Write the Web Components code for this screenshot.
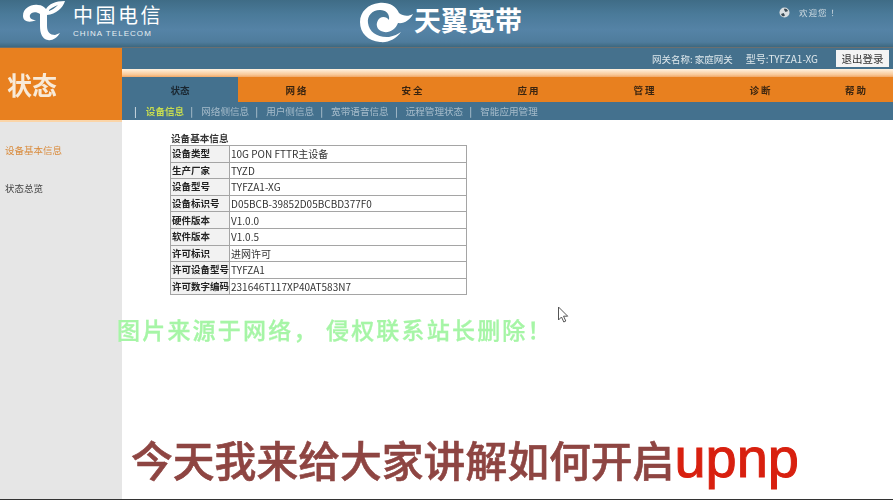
<!DOCTYPE html>
<html lang="zh">
<head>
<meta charset="utf-8">
<title>设备信息</title>
<style>
  html, body { margin: 0; height: 100%; background: #fff; overflow: hidden; }
  body { font-family: "Noto Sans CJK SC", "Noto Sans", sans-serif; font-size: 10px; color: #333; }
  gateway-page { filter: blur(.35px); }
</style>
</head>
<body>
<gateway-page>
  <top-banner slot="banner"></top-banner>
  <side-menu slot="side" title-text="状态">
    <side-item active>设备基本信息</side-item>
    <side-item>状态总览</side-item>
  </side-menu>
  <status-bar slot="status"></status-bar>
  <main-nav slot="nav"></main-nav>
  <info-table slot="content"></info-table>
</gateway-page>
<video-overlay></video-overlay>

<script>
class GatewayPage extends HTMLElement {
  constructor(){
    super()
    this.attachShadow({mode: 'open'}).innerHTML = `
      <style>
        :host { display: grid; grid-template-columns: 122px 1fr; grid-template-rows: 48px auto 1fr; height: 499px; }
        .banner { grid-column: 1 / 3; }
        .side { grid-row: 2 / 4; }
        .content { padding: 12px 0 0 48px; }
      </style>
      <div class="banner"><slot name="banner"></slot></div>
      <div class="side"><slot name="side"></slot></div>
      <div><slot name="status"></slot><slot name="nav"></slot></div>
      <div class="content"><slot name="content"></slot></div>`
  }
}
customElements.define('gateway-page', GatewayPage)

class TopBanner extends HTMLElement {
  constructor(){
    super()
    this.attachShadow({mode: 'open'}).innerHTML = `
      <style>
        :host { display: flex; height: 48px; box-sizing: border-box; color: #fff;
          background: linear-gradient(#3f6c86 0, #4a7a99 14px, #5583a6 30px, #4f7c9c 42px, #3d6880 47px); border-bottom: 1px solid #6b6f70; }
        .telecom { display: flex; align-items: flex-start; gap: 7px; width: 358px; padding: 0 0 0 22px; box-sizing: border-box; }
        .names { display: flex; flex-direction: column; }
        .cn { font: 20px/29px "Noto Sans CJK SC", sans-serif; letter-spacing: 2.500px; white-space: nowrap; }
        .en { font: 8px/9.500px "Liberation Sans", sans-serif; letter-spacing: 1.050px; white-space: nowrap; color: #e6eef2; }
        .wing { display: flex; align-items: flex-start; width: 421px; padding-top: 1px; }
        .wing b { font: 700 27px/38px "Noto Sans CJK SC", sans-serif; }
        .hello { display: flex; gap: 9px; align-items: center; height: 24px; font-size: 8.5px; color: #cfdbe2; }
        .hello span { letter-spacing: 1px; }
      </style>
      <div class="telecom">
        <svg width="44" height="42" viewBox="0 0 44 42">
          <path fill="#fff" fill-rule="evenodd" d="M1 16C1 8 9 4 16 5C20 5 22 7 24 9C27 4 33 1 43 1C41 8 34 14 25 15L25 26C25 32 28 35 33 35L38 33C35 38 30 41 26 40C20 39 18 33 18 26L18 14C14 11 9 12 8 15C7 18 10 20 14 20C8 23 1 22 1 16ZM27 10C29 8 32 7 36 5C33 8 30 10 27 11Z"/>
        </svg>
        <div class="names"><span class="cn">中国电信</span><span class="en">CHINA TELECOM</span></div>
      </div>
      <div class="wing">
        <svg width="56" height="42" viewBox="0 0 56 42">
          <path fill="#fff" fill-rule="evenodd" d="M21 2C31 1 38 5 41 12C45 15 50 16 55 13C52 19 46 23 40 22C37 30 29 33 23 30C17 27 18 20 22 17C25 15 29 16 31 19C32 13 28 9 22 9C14 9 9 15 10 22C11 31 20 37 31 36C36 35 40 33 43 31C38 38 30 42 22 41C10 40 2 32 2 21C2 11 10 3 21 2Z"/>
        </svg>
        <b>天翼宽带</b>
      </div>
      <div>
        <div class="hello">
          <svg width="11" height="11" viewBox="0 0 11 11"><circle cx="5.5" cy="5.5" r="5" fill="#d8dde0"/><path fill="#3a4a55" d="M5.5 1.5a4 4 0 0 1 3.6 2.400L6.500 5 5 2.800zM2 7l2.700-1 1.300 2.400L4 9.500A4 4 0 0 1 2 7z"/></svg>
          <span>欢迎您 ！</span>
        </div>
      </div>`
  }
}
customElements.define('top-banner', TopBanner)

class SideMenu extends HTMLElement {
  constructor(){
    super()
    this.attachShadow({mode: 'open'}).innerHTML = `
      <style>
        :host { display: flex; flex-direction: column; height: 100%; background: #e6e6e6; }
        h1 { margin: 0; height: 74px; box-sizing: border-box; padding: 19px 0 0 7px; background: #e8801f; color: #f8ead8;
          border-bottom: 2px solid #fbd5a8; font: 700 25px/34px "Noto Sans CJK SC", sans-serif; }
        .items { display: flex; flex-direction: column; gap: 20px; padding-top: 19px; }
      </style>
      <h1>${this.getAttribute('title-text')}</h1>
      <div class="items"><slot></slot></div>`
  }
}
customElements.define('side-menu', SideMenu)

class SideItem extends HTMLElement {
  constructor(){
    super()
    this.attachShadow({mode: 'open'}).innerHTML = `
      <style>
        :host { display: block; padding-left: 5px; font-size: 9.5px; line-height: 18px; color: #444; }
        :host([active]) { color: #d98a3a; }
      </style>
      <slot></slot>`
  }
}
customElements.define('side-item', SideItem)

class StatusBar extends HTMLElement {
  constructor(){
    super()
    this.attachShadow({mode: 'open'}).innerHTML = `
      <style>
        :host { display: flex; justify-content: flex-end; align-items: center; height: 21px; box-sizing: border-box;
          padding-right: 4px; background: #45718d; color: #dfe8ec; font-size: 10px; }
        .name { font-size: 9.500px; margin-right: 13px; }
        button { all: unset; width: 53px; height: 17px; margin-left: 18px; background: #f4f4f4; color: #333; font-size: 10.500px; text-align: center; line-height: 17px; }
      </style>
      <span class="name">网关名称: 家庭网关</span>
      <span>型号:TYFZA1-XG</span>
      <button>退出登录</button>`
  }
}
customElements.define('status-bar', StatusBar)

class MainNav extends HTMLElement {
  static items = ['状态', '网络', '安全', '应用', '管理', '诊断', '帮助']
  static subItems = ['设备信息', '网络侧信息', '用户侧信息', '宽带语音信息', '远程管理状态', '智能应用管理']

  constructor(){
    super()
    this.attachShadow({mode: 'open'}).innerHTML = `
      <style>
        :host { display: block; }
        .stripe { height: 8px; background: linear-gradient(#fff2e0, #f9c998 70%, #f0a868); }
        ul { list-style: none; margin: 0; padding: 0; }
        .tabs { display: grid; grid-template-columns: repeat(6, 116px) 1fr; height: 25px; background: #e8801f; }
        .tabs li { text-align: center; padding-left: 2px; font: 700 9.5px/26px "Noto Sans CJK SC", sans-serif; letter-spacing: 2px; color: #3a2410; }
        .tabs li.on { padding-left: 0; background: #44718e; color: #1a2630; letter-spacing: 0; }
        .sub { display: flex; height: 18px; align-items: center; gap: 6.400px; padding-left: 12px; background: #44718e; color: #a6bccb; font-size: 9.6px; }
        .sub li { display: flex; gap: 6px; }
        .sub li::before { content: "|"; color: #cfdbe2; padding-right: 2px; }
        .sub li.on { color: #c6dc50; font-weight: 700; }
        .sub li:first-child::before { padding-right: 3px; }
      </style>
      <div class="stripe"></div>
      <ul class="tabs">${MainNav.items.map((item, i) => `<li class="${i == 0 ? 'on' : ''}">${item}</li>`).join('')}</ul>
      <ul class="sub">${MainNav.subItems.map((item, i) => `<li class="${i == 0 ? 'on' : ''}">${item}</li>`).join('')}</ul>`
  }
}
customElements.define('main-nav', MainNav)

class InfoTable extends HTMLElement {
  static rows = [
    ['设备类型', '10G PON FTTR主设备'],
    ['生产厂家', 'TYZD'],
    ['设备型号', 'TYFZA1-XG'],
    ['设备标识号', 'D05BCB-39852D05BCBD377F0'],
    ['硬件版本', 'V1.0.0'],
    ['软件版本', 'V1.0.5'],
    ['许可标识', '进网许可'],
    ['许可设备型号', 'TYFZA1'],
    ['许可数字编码', '231646T117XP40AT583N7']
  ]

  constructor(){
    super()
    this.attachShadow({mode: 'open'}).innerHTML = `
      <style>
        :host { display: block; width: 297px; font-size: 10px; color: #333; }
        .title { font-size: 9.6px; font-weight: 700; line-height: 13px; height: 13px; padding-left: 1px; }
        table { width: 100%; border-collapse: collapse; table-layout: fixed; }
        td { border: 1px solid #a5a5a5; height: 15.600px; padding: 0 0 0 1px; line-height: 15px; white-space: nowrap; overflow: hidden; box-sizing: content-box; }
        td:first-child { width: 57px; font-size: 9.5px; background: #f2f2f2; font-weight: 700; color: #222; }
      </style>
      <div class="title">设备基本信息</div>
      <table>${InfoTable.rows.map(([label, value]) => `<tr><td>${label}</td><td>${value}</td></tr>`).join('')}</table>`
  }
}
customElements.define('info-table', InfoTable)

class VideoOverlay extends HTMLElement {
  constructor(){
    super()
    this.attachShadow({mode: 'open'}).innerHTML = `
      <style>
        :host { display: block; position: absolute; inset: 0; pointer-events: none; }
        .mark, .caption, svg { position: absolute; }
        .mark { left: 117px; top: 313px; font: 500 23px/32px "Noto Sans CJK SC", sans-serif; letter-spacing: 2.200px; color: #a6f5a6; -webkit-text-stroke: .3px #a6f5a6; white-space: nowrap; }
        .caption { left: 131px; top: 426px; font: 500 41.800px/64px "Noto Sans CJK SC", sans-serif; color: #8e4542; -webkit-text-stroke: .6px #8e4542; white-space: nowrap; }
        .caption b { font: 400 56px/64px "Liberation Sans", sans-serif; color: #d8200f; -webkit-text-stroke: 1px #d8200f; }
        .edge { position: absolute; left: 0; right: 0; bottom: 0; height: 1px; background: #333; }
        svg { left: 557px; top: 306px; }
      </style>
      <div class="mark">图片来源于网络， 侵权联系站长删除！</div>
      <svg width="12" height="18" viewBox="0 0 12 18"><path d="M1.500 1v13l3-3 2.300 5 2-1-2.300-4.800h4.200z" fill="#fff" stroke="#555" stroke-width="1"/></svg>
      <div class="caption">今天我来给大家讲解如何开启<b>upnp</b></div>
      <div class="edge"></div>`
  }
}
customElements.define('video-overlay', VideoOverlay)
</script>
</body>
</html>
